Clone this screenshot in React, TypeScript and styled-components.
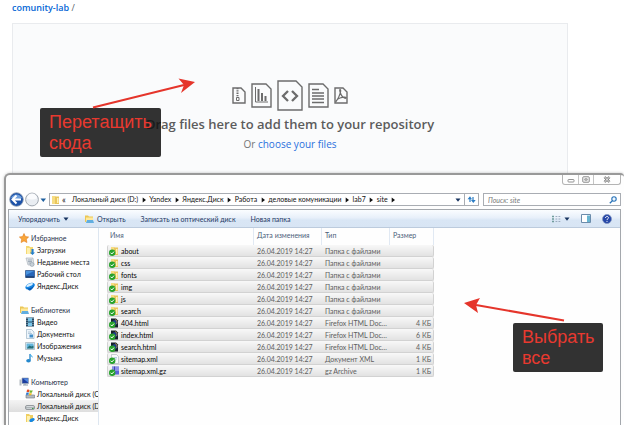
import React from 'react';
import styled, { createGlobalStyle, css } from 'styled-components';

const GlobalStyle = createGlobalStyle`
  *, *::before, *::after { box-sizing: border-box; }
  html, body { margin: 0; background: #fff; overflow: hidden; }
  button, input { font: inherit; color: inherit; }
`;

const pageFont = '"Open Sans", "Noto Sans", sans-serif';
const windowFont = 'Lato, "Open Sans", sans-serif';

const Page = styled.main`
  position: relative;
  display: flex;
  flex-direction: column;
  height: 100vh;
  overflow: hidden;
  font-family: ${pageFont};
`;

const RepoPath = styled.nav`
  padding: 0 12px;
  font-size: 9px;
  line-height: 15px;
  color: #586069;
  a { color: #0366d6; font-weight: 600; text-decoration: none; }
`;

const DropZone = styled.section`
  flex: none;
  display: flex;
  flex-direction: column;
  align-items: center;
  height: 150px;
  margin: 8px 56px 0 12px;
  padding-top: 55px;
  background: #fafbfc;
  border: 1px solid #e9ebee;
  border-bottom: 0;
`;

const FileIcons = styled.div`
  display: flex;
  align-items: center;
  gap: 5px;
  height: 32px;
  svg { display: block; fill: none; stroke: #6c6c6c; stroke-width: 1.4; }
`;

const DropTitle = styled.h1`
  margin: 4px 0 0;
  font-size: 13px;
  line-height: 18px;
  font-weight: 600;
  color: #5c5c5c;
`;

const DropHint = styled.p`
  margin: 2px 0 0;
  font-size: 10px;
  line-height: 18px;
  color: #767676;
`;

const LinkButton = styled.button`
  padding: 0;
  border: 0;
  background: none;
  color: #2a70dc;
  cursor: pointer;
`;

const Window = styled.section`
  flex: 1;
  display: flex;
  flex-direction: column;
  min-height: 0;
  margin: 0 0 0 4px;
  padding: 0 3px 0 2px;
  background: #fefefe;
  border: solid #999;
  border-width: 2px 0 0 2px;
  border-radius: 6px 4px 0 0;
  box-shadow: 0 0 3px rgba(0, 0, 0, 0.25);
  font-family: ${windowFont};
  font-size: 7px;
  color: #111;
`;

const TitleBar = styled.header`
  flex: none;
  display: flex;
  justify-content: flex-end;
  align-items: flex-start;
  height: 18px;
`;

const Captions = styled.div`
  display: flex;
  height: 10px;
  border: 1px solid #b4b4b4;
  border-top: 0;
  border-radius: 0 0 3px 3px;
`;

const CaptionButton = styled.button<{ $wide?: boolean }>`
  display: grid;
  place-items: center;
  width: ${p => (p.$wide ? 27 : 15)}px;
  padding: 0;
  border: 0;
  background: none;
  & + & { border-left: 1px solid #c4c4c4; }
`;

const AddressRow = styled.div`
  flex: none;
  display: flex;
  align-items: center;
  gap: 4px;
  height: 13px;
  margin-bottom: 3px;
`;

const NavButtons = styled.div`
  display: flex;
  align-items: center;
  width: 37px;
`;

const PlainButton = styled.button`
  display: flex;
  align-items: center;
  padding: 0;
  border: 0;
  background: none;
  white-space: nowrap;
  svg { display: block; }
`;

const fieldBox = css`
  display: flex;
  align-items: center;
  height: 13px;
  border: 1px solid #a9adb3;
  background: #fff;
`;

const AddressField = styled.div`
  ${fieldBox}
  flex: 1;
  min-width: 0;
`;

const Crumbs = styled.nav`
  flex: 1;
  display: flex;
  align-items: center;
  min-width: 0;
  overflow: hidden;
  line-height: 11px;
`;

const CrumbArrow = styled.span`
  flex: none;
  display: grid;
  place-items: center;
  width: 11px;
`;

const Overflow = styled.span`
  width: 10px;
  margin-left: 2px;
  font-size: 9px;
`;

const Refresh = styled(PlainButton)`
  justify-content: center;
  width: 14px;
  height: 11px;
  margin-left: 3px;
  border-left: 1px solid #a9adb3;
`;

const SearchField = styled.label`
  ${fieldBox}
  width: 138px;
  padding: 0 3px 0 4px;
`;

const SearchInput = styled.input`
  flex: 1;
  min-width: 0;
  height: 11px;
  padding: 0;
  border: 0;
  outline: 0;
  background: none;
  font-style: italic;
  &::placeholder { color: #777; opacity: 1; }
`;

const Client = styled.div`
  flex: 1;
  display: flex;
  flex-direction: column;
  min-height: 0;
  border: 1px solid #a4a8ad;
  border-bottom: 0;
`;

const Toolbar = styled.div`
  flex: none;
  display: flex;
  align-items: center;
  gap: 15px;
  height: 18px;
  padding: 0 8px 0 9px;
  background: linear-gradient(#fbfdff 0%, #e8f0fa 45%, #d9e6f5 60%, #d8e5f4 100%);
  border-bottom: 1px solid #bccbdd;
  color: #1e3863;
`;

const ToolButton = styled(PlainButton)`
  gap: 3px;
`;

const ToolbarEnd = styled.div`
  display: flex;
  align-items: center;
  gap: 11px;
  margin-left: auto;
`;

const Body = styled.div`
  flex: 1;
  display: flex;
  min-height: 0;
`;

const Sidebar = styled.nav`
  flex: none;
  width: 90px;
  padding-top: 4px;
  overflow: hidden;
  border-right: 1px solid #dde6f0;
`;

const Group = styled.ul`
  margin: 0 0 12px;
  padding: 0;
  list-style: none;
`;

const SideItem = styled(PlainButton)<{ $head?: boolean; $active?: boolean }>`
  gap: 2px;
  width: 100%;
  height: 12px;
  padding-left: ${p => (p.$head ? 10 : 16)}px;
  color: ${p => (p.$head ? '#1f3048' : '#111')};
  background: ${p => (p.$active ? 'linear-gradient(#f4f4f4, #dedede)' : 'none')};
  svg { flex: none; }
`;

const Files = styled.div`
  flex: 1;
  min-width: 0;
  padding-left: 8px;
`;

const Table = styled.table`
  table-layout: fixed;
  width: 327px;
  border-collapse: separate;
  border-spacing: 0;
  line-height: 10px;
  color: #606060;
`;

const Col = styled.col<{ $w: number }>`
  width: ${p => p.$w}px;
`;

const Th = styled.th`
  height: 17px;
  padding: 0 0 3px 3px;
  font-weight: 400;
  text-align: left;
  color: #4c607a;
  border-right: 1px solid #e1e9f3;
`;

const Td = styled.td<{ $right?: boolean }>`
  height: 12px;
  padding: 0 3px;
  white-space: nowrap;
  overflow: hidden;
  text-align: ${p => (p.$right ? 'right' : 'left')};
  background: linear-gradient(#f8f8f8, #e2e2e2);
  border: solid #d2d2d2;
  border-width: 0 0 1px;
  &:first-child { padding-left: 1px; border-left-width: 1px; border-radius: 2px 0 0 2px; }
  &:last-child { padding-right: 2px; border-right-width: 1px; border-radius: 0 2px 2px 0; }
`;

const FileName = styled.span`
  display: flex;
  align-items: center;
  gap: 2px;
  color: #000;
  svg { flex: none; }
`;

const Callout = styled.aside<{ $x: number; $y: number; $w: number }>`
  position: absolute;
  left: ${p => p.$x}px;
  top: ${p => p.$y}px;
  width: ${p => p.$w}px;
  padding: 4px 0 3px 9px;
  border-radius: 2px;
  background: rgba(16, 16, 16, 0.86);
  color: #e8392f;
  font-family: "Liberation Sans", Arial, sans-serif;
  font-size: 18px;
  line-height: 21px;
`;

const Arrows = styled.svg`
  position: absolute;
  left: 0;
  top: 0;
  pointer-events: none;
`;

const Triangle = ({ down }: { down?: boolean }) => (
  <svg width="6" height="6" viewBox="0 0 6 6" aria-hidden>
    <path d={down ? 'M.5 1.5h5L3 4.8z' : 'M1.7.5v5L5 3z'} fill={down ? '#17335f' : '#111'} />
  </svg>
);

const Sheet = ({ w, h, cut, children }: { w: number; h: number; cut: number; children: React.ReactNode }) => (
  <svg width={w} height={h} viewBox={`0 0 ${w} ${h}`} aria-hidden>
    <path d={`M1 1H${w - cut}L${w - 1} ${cut}V${h - 1}H1z`} />
    {children}
  </svg>
);

type IconName =
  | 'star' | 'downloads' | 'recent' | 'desktop' | 'yadisk' | 'library' | 'video' | 'docs'
  | 'pictures' | 'music' | 'computer' | 'sysdrive' | 'drive' | 'yafolder' | 'folder' | 'html' | 'xml' | 'gz';

const shapes: Record<IconName, React.ReactNode> = {
  star: <path d="M5 .5 6.4 3.6l3.2.4-2.3 2.2.6 3.3L5 7.9 2.1 9.5l.6-3.3L.4 4l3.2-.4z" fill="#f9a63a" stroke="#e07c1b" strokeWidth=".6" />,
  downloads: <><path d="M1 1h3l1 1h3v7H1z" fill="#f4d873" /><path d="M2 3h3v6H2z" fill="#fff0ae" /><path d="M6.5 4v3.5H5L7.5 10 10 7.500H8.600V4z" fill="#267fca" /></>,
  recent: <><path d="M1 1h7l1 7H3z" fill="#dfe4e8" stroke="#a4adb6" strokeWidth=".6" /><path d="M3 3h4M3 4.500h4M3.500 6h3" stroke="#78899a" strokeWidth=".6" /><circle cx="7" cy="7.500" r="2" fill="#c6d0d8" stroke="#8593a0" strokeWidth=".5" /></>,
  desktop: <><path d="M.5 1.500h9v7h-9z" fill="#2766b8" stroke="#1a3f7b" strokeWidth=".6" /><path d="M1 2h8L1 6z" fill="#4993df" /><path d="M1 7.500h8v1H1z" fill="#162c51" /></>,
  yadisk: <><ellipse cx="5" cy="5.200" rx="5" ry="3" transform="rotate(-25 5 5)" fill="#1687e4" /><ellipse cx="4.700" cy="3.800" rx="3.600" ry="1.200" transform="rotate(-25 5 4)" fill="#d9efff" /><path d="M2 7c3 1 6-1 7-3-.3 3-3 6-5 5.500z" fill="#075bb6" /></>,
  library: <><path d="M1 1.500h3l1 1h4V8H1z" fill="#ebc756" /><path d="M2 3.500h7V8H2z" fill="#ffe99b" /><path d="M3 6h6l1 3H2z" fill="#61aee0" /></>,
  video: <><path d="M1 .5h8v9H1z" fill="#254b66" /><path d="M3 1h4v3.500H3zM3 5.500h4V9H3z" fill="#79c5e8" /><path d="M2 1v8M8 1v8" stroke="#dce9ef" strokeWidth=".7" strokeDasharray="1 1" /></>,
  docs: <><path d="M1.500.5h5L9 3v6.500H1.500z" fill="#eef5fb" stroke="#8fa9bd" strokeWidth=".6" /><path d="M3 3h3M3 4.500h4" stroke="#8eabc4" strokeWidth=".6" /><path d="M4.500 5.500H8v3H4.500z" fill="#438fc9" /></>,
  pictures: <><path d="M.5 1.500h9v7h-9z" fill="#edf3f6" stroke="#90a4ae" strokeWidth=".6" /><path d="M1.500 2.500h7v5h-7z" fill="#65b6dd" /><path d="m1.500 7.500 3-3 2 1 2-1v3z" fill="#276f78" /></>,
  music: <><path d="M5 1v6.500" stroke="#2482c4" strokeWidth="1.300" /><path d="M5 .3c.3 2 3.500 2 2.500 5C7.300 3.500 6 3.500 5 3z" fill="#4fb1e8" /><ellipse cx="3.500" cy="7.700" rx="2.300" ry="1.700" fill="#2588cd" /></>,
  computer: <><path d="M3 1h6.500v5.500H3z" fill="#1d3d9e" stroke="#9baab9" strokeWidth=".7" /><path d="m4 1.500 5 4V1.500z" fill="#4d85e0" /><path d="M.5 2.500h2v6h-2z" fill="#b4bcc3" /><path d="M4 8h5M6 6.500V8" stroke="#8a99a7" /></>,
  sysdrive: <><path d="M1 6h8.500v3H1z" fill="#b4bbc0" stroke="#6e777f" strokeWidth=".6" /><path d="M2 1c1-.7 2-.3 2.600 0L4 3.300c-.8-.4-1.700-.4-2.500 0z" fill="#e64c28" /><path d="M5 1.200c1 .4 1.700.4 2.700 0L7 3.500c-.8.4-1.700.4-2.600 0z" fill="#72b62c" /><path d="M1.400 3.700c1-.4 1.600-.3 2.500 0L3.300 6c-.8-.4-1.700-.4-2.500 0z" fill="#2b78cf" /><path d="M4.300 4c.9.4 1.700.4 2.600 0l-.6 2c-.8.500-1.700.400-2.500 0z" fill="#f2bd27" /></>,
  drive: <><rect x=".5" y="4.500" width="9" height="4" rx="1.500" fill="#d5dadd" stroke="#747b80" strokeWidth=".7" /><path d="M1 6.700h8" stroke="#8e9599" strokeWidth=".7" /><path d="M7 7.500h1.500" stroke="#39a04a" /></>,
  yafolder: <><path d="M1 1h3l1 1h3v7H1z" fill="#efcf61" /><path d="M2 3h3v6H2z" fill="#fff0ae" /><ellipse cx="7" cy="7" rx="2.800" ry="1.700" transform="rotate(-25 7 7)" fill="#1688e4" /></>,
  folder: <><path d="M2 1h3.500v8H2z" fill="#f6dc83" /><path d="M5 1.500h4V9H5z" fill="#e9c65b" /><path d="M7 3h1.500v5H7z" fill="#fff1b6" /></>,
  html: <><path d="M2 .5h5L9 2.500v7H2z" fill="#17202b" /><circle cx="6" cy="4.500" r="2.500" fill="#203d86" /><path d="M6 1.500c2 .5 2.500 2.500 1.500 4.500" fill="none" stroke="#d9a441" strokeWidth=".7" /></>,
  xml: <><path d="M2.500.5h5L9.500 2.500v7h-7z" fill="#f8fafb" stroke="#a8b0b7" strokeWidth=".6" /><path d="M5 3.500h3M5 5h3" stroke="#8cb1d1" strokeWidth=".6" /></>,
  gz: <><path d="M3 .5h7v8H3z" fill="#5b62d9" /><path d="M3 2h7M3 4h7" stroke="#d4d6ff" strokeWidth=".8" /><path d="M5.500.5v8" stroke="#2a319c" strokeWidth=".8" /></>,
};

const Icon = ({ name, synced }: { name: IconName; synced?: boolean }) => (
  <svg width="10" height="10" viewBox="0 0 10 10" aria-hidden>
    {shapes[name]}
    {synced && (
      <>
        <circle cx="3.200" cy="6.700" r="3.200" fill="#27a22c" />
        <path d="m1.600 6.700 1.200 1.300L5 5.600" fill="none" stroke="#fff" strokeWidth="1" />
      </>
    )}
  </svg>
);

type Side = { label: string; icon: IconName; active?: boolean };
const groups: Side[][] = [
  [
    { label: 'Избранное', icon: 'star' },
    { label: 'Загрузки', icon: 'downloads' },
    { label: 'Недавние места', icon: 'recent' },
    { label: 'Рабочий стол', icon: 'desktop' },
    { label: 'Яндекс.Диск', icon: 'yadisk' },
  ],
  [
    { label: 'Библиотеки', icon: 'library' },
    { label: 'Видео', icon: 'video' },
    { label: 'Документы', icon: 'docs' },
    { label: 'Изображения', icon: 'pictures' },
    { label: 'Музыка', icon: 'music' },
  ],
  [
    { label: 'Компьютер', icon: 'computer' },
    { label: 'Локальный диск (C', icon: 'sysdrive' },
    { label: 'Локальный диск (D', icon: 'drive', active: true },
    { label: 'Яндекс.Диск', icon: 'yafolder' },
  ],
];

const folderType = 'Папка с файлами';
const htmlType = 'Firefox HTML Doc...';
const files: [string, IconName, string, string][] = [
  ['about', 'folder', folderType, ''],
  ['css', 'folder', folderType, ''],
  ['fonts', 'folder', folderType, ''],
  ['img', 'folder', folderType, ''],
  ['js', 'folder', folderType, ''],
  ['search', 'folder', folderType, ''],
  ['404.html', 'html', htmlType, '4 КБ'],
  ['index.html', 'html', htmlType, '6 КБ'],
  ['search.html', 'html', htmlType, '4 КБ'],
  ['sitemap.xml', 'xml', 'Документ XML', '1 КБ'],
  ['sitemap.xml.gz', 'gz', 'gz Archive', '1 КБ'],
];

const crumbs = ['Локальный диск (D:)', 'Yandex', 'Яндекс.Диск', 'Работа', 'деловые комуникации', 'lab7', 'site'];

export default function App() {
  return (
    <Page>
      <GlobalStyle />
      <RepoPath><a href="#repo">comunity-lab</a> /</RepoPath>
      <DropZone>
        <FileIcons>
          <Sheet w={14} h={17} cut={5}>
            <path d="M5.500 1v9" strokeDasharray="1.300 1" strokeWidth="2" />
            <path d="M4.500 10.500h2.500v3H4.500z" strokeWidth="1" />
          </Sheet>
          <Sheet w={21} h={25} cut={6}>
            <path d="M4.500 4v15H17" strokeWidth="1" />
            <path d="M7.500 6v12M11 10v8M14.500 13v5" strokeWidth="2" />
          </Sheet>
          <Sheet w={26} h={31} cut={7}>
            <path d="m11 11-5 5 5 5M15 11l5 5-5 5" strokeWidth="2.300" />
          </Sheet>
          <Sheet w={21} h={25} cut={6}>
            <path d="M4 6.500h7M4 10h12M4 13h12M4 16h12M4 19.500h12" />
          </Sheet>
          <Sheet w={14} h={17} cut={5}>
            <path d="M6 2.500c1.500 0 .5 5-3.500 11.500C1 16 2 12.500 6 11s7-1 6 0-4.500-1-5.800-5.500C5.700 3.500 5.500 2.500 6 2.500z" strokeWidth="1.200" />
          </Sheet>
        </FileIcons>
        <DropTitle>Drag files here to add them to your repository</DropTitle>
        <DropHint>Or <LinkButton>choose your files</LinkButton></DropHint>
      </DropZone>

      <Window>
        <TitleBar>
          <Captions>
            <CaptionButton aria-label="Свернуть">
              <svg width="8" height="6" viewBox="0 0 8 6"><rect x="1" y="2.500" width="6" height="2.500" rx=".7" fill="#fff" stroke="#777" strokeWidth=".8" /></svg>
            </CaptionButton>
            <CaptionButton aria-label="Развернуть">
              <svg width="8" height="7" viewBox="0 0 8 7"><rect x=".8" y=".8" width="6.400" height="5.400" rx=".7" fill="#fff" stroke="#777" strokeWidth=".9" /><path d="M2.800 2.800h2.400v1.400H2.800z" fill="none" stroke="#777" strokeWidth=".8" /></svg>
            </CaptionButton>
            <CaptionButton $wide aria-label="Закрыть">
              <svg width="8" height="7" viewBox="0 0 8 7"><path d="m1.500 1 5 5M6.500 1l-5 5" stroke="#666" strokeWidth="2.400" /><path d="m1.500 1 5 5M6.500 1l-5 5" stroke="#fff" strokeWidth="1" /></svg>
            </CaptionButton>
          </Captions>
        </TitleBar>

        <AddressRow>
          <NavButtons>
            <PlainButton aria-label="Назад">
              <svg width="16" height="15" viewBox="0 0 16 15">
                <circle cx="8.500" cy="7.500" r="6.800" fill="#1d52a8" stroke="#8c9bb0" strokeWidth=".8" />
                <path d="M3 6a6 6 0 0 1 11 0c-3 1.500-8 1.500-11 0z" fill="#6f9fdc" />
                <path d="M8.500 3.500 4.500 7.500l4 4M5 7.500h8" fill="none" stroke="#fff" strokeWidth="2" />
              </svg>
            </PlainButton>
            <PlainButton aria-label="Вперёд">
              <svg width="15" height="15" viewBox="0 0 15 15">
                <circle cx="8" cy="7.500" r="6.400" fill="#e9edf2" stroke="#a1a8b1" />
                <path d="M3 6.500a5 5 0 0 1 10 0c-3 1.300-7 1.300-10 0z" fill="#fafbfd" />
              </svg>
            </PlainButton>
            <PlainButton aria-label="Последние страницы">
              <svg width="7" height="6" viewBox="0 0 7 6"><path d="M1.500 1.500H7L4.300 5z" fill="#1e5f9e" /></svg>
            </PlainButton>
          </NavButtons>
          <AddressField>
            <Icon name="folder" />
            <Crumbs aria-label="Путь">
              <Overflow>«</Overflow>
              {crumbs.map(c => (
                <React.Fragment key={c}>
                  <PlainButton>{c}</PlainButton>
                  <CrumbArrow><Triangle /></CrumbArrow>
                </React.Fragment>
              ))}
            </Crumbs>
            <PlainButton aria-label="Предыдущие расположения"><Triangle down /></PlainButton>
            <Refresh aria-label="Обновить">
              <svg width="9" height="9" viewBox="0 0 9 9"><path d="M3 7V3.500M6 2v3.500" stroke="#2b7cc4" strokeWidth="1.200" /><path d="M.5 4.200 3 1.200l2 3zM4 5l2.300 3L8.700 5z" fill="#2b7cc4" /></svg>
            </Refresh>
          </AddressField>
          <SearchField>
            <SearchInput aria-label="Поиск: site" placeholder="Поиск: site" />
            <svg width="8" height="8" viewBox="0 0 8 8"><circle cx="5" cy="3" r="2.200" fill="#eef7ff" stroke="#2772b8" strokeWidth="1.100" /><path d="M3.500 4.600.8 7.300" stroke="#2772b8" strokeWidth="1.300" /></svg>
          </SearchField>
        </AddressRow>

        <Client>
          <Toolbar>
            <ToolButton>Упорядочить <Triangle down /></ToolButton>
            <ToolButton><Icon name="library" />Открыть</ToolButton>
            <ToolButton>Записать на оптический диск</ToolButton>
            <ToolButton>Новая папка</ToolButton>
            <ToolbarEnd>
              <ToolButton aria-label="Вид">
                <svg width="10" height="8" viewBox="0 0 10 8"><path d="M1 1.500h2M1 4h2M1 6.500h2" stroke="#6f9c9c" strokeWidth="1.400" /><path d="M4.500 1.500h1.800M4.500 4h1.800M4.500 6.500h1.800M7.500 1.500h1.800M7.500 4h1.800M7.500 6.500h1.800" stroke="#93a3b8" strokeWidth=".9" /></svg>
                <Triangle down />
              </ToolButton>
              <ToolButton aria-label="Область просмотра">
                <svg width="10" height="9" viewBox="0 0 10 9"><path d="M.5.5h9v8h-9z" fill="#fff" stroke="#6b8cab" /><path d="M6 1.500h3V8H6z" fill="#68b5d1" /></svg>
              </ToolButton>
              <ToolButton aria-label="Справка">
                <svg width="10" height="10" viewBox="0 0 10 10"><circle cx="5" cy="5" r="4.500" fill="#2446a8" stroke="#8193bd" strokeWidth=".7" /><path d="M3.500 4c0-2 3-2 3-.2 0 1-1.500 1-1.500 2.200M5 6.900v1" fill="none" stroke="#fff" strokeWidth="1" /></svg>
              </ToolButton>
            </ToolbarEnd>
          </Toolbar>
          <Body>
            <Sidebar aria-label="Папки">
              {groups.map(g => (
                <Group key={g[0].label}>
                  {g.map((item, i) => (
                    <li key={item.label}>
                      <SideItem $head={i === 0} $active={item.active}>
                        <Icon name={item.icon} />{item.label}
                      </SideItem>
                    </li>
                  ))}
                </Group>
              ))}
            </Sidebar>
            <Files>
              <Table>
                <colgroup><Col $w={147} /><Col $w={68} /><Col $w={68} /><Col $w={44} /></colgroup>
                <thead>
                  <tr><Th>Имя</Th><Th>Дата изменения</Th><Th>Тип</Th><Th>Размер</Th></tr>
                </thead>
                <tbody>
                  {files.map(([name, icon, type, size]) => (
                    <tr key={name}>
                      <Td><FileName><Icon name={icon} synced />{name}</FileName></Td>
                      <Td>26.04.2019 14:27</Td>
                      <Td>{type}</Td>
                      <Td $right>{size}</Td>
                    </tr>
                  ))}
                </tbody>
              </Table>
            </Files>
          </Body>
        </Client>
      </Window>

      <Callout $x={40} $y={108} $w={121}>Перетащить<br />сюда</Callout>
      <Callout $x={513} $y={323} $w={90}>Выбрать<br />все</Callout>
      <Arrows width="624" height="425" viewBox="0 0 624 425" aria-hidden>
        <g fill="#e5352b" stroke="#e5352b">
          <path d="M93 107.500 184 85M564 320.500 476 305" strokeWidth="2" />
          <path d="M195 82 178.500 78.500 184 85 181 93zM464 303l16-5-4 7 2 8z" stroke="none" />
        </g>
      </Arrows>
    </Page>
  );
}
